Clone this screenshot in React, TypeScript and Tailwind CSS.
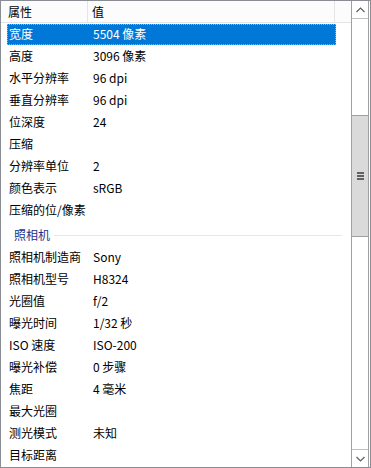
import React from "react";

const rows1: [string, string][] = [
  ["宽度", "5504 像素"],
  ["高度", "3096 像素"],
  ["水平分辨率", "96 dpi"],
  ["垂直分辨率", "96 dpi"],
  ["位深度", "24"],
  ["压缩", ""],
  ["分辨率单位", "2"],
  ["颜色表示", "sRGB"],
  ["压缩的位/像素", ""],
];

const rows2: [string, string][] = [
  ["照相机制造商", "Sony"],
  ["照相机型号", "H8324"],
  ["光圈值", "f/2"],
  ["曝光时间", "1/32 秒"],
  ["ISO 速度", "ISO-200"],
  ["曝光补偿", "0 步骤"],
  ["焦距", "4 毫米"],
  ["最大光圈", ""],
  ["测光模式", "未知"],
  ["目标距离", ""],
];

function Row({ k, v, selected }: { k: string; v: string; selected?: boolean }) {
  return (
    <div className="h-[22px] flex items-center pl-[6px]">
      <div
        className={
          selected
            ? "flex items-center h-[21px] w-[329px] bg-[#0078d7] text-white border border-dotted border-[#f0a040]"
            : "flex items-center h-[21px] w-[329px] text-black border border-transparent"
        }
      >
        <div className="w-[85px] pl-[1px] whitespace-nowrap">{k}</div>
        <div className="whitespace-nowrap">{v}</div>
      </div>
    </div>
  );
}

export default function App() {
  return (
    <div
      className="w-[371px] h-[468px] border border-[#8a8d93] bg-white flex overflow-hidden text-[12px] leading-none"
      style={{ fontFamily: '"Noto Sans CJK SC", "Noto Sans", sans-serif' }}
    >
      <div className="flex-1 flex flex-col">
        <div className="h-[22px] flex bg-[#fcfcfc] border-b border-[#e5e5e5] text-black">
          <div className="w-[87px] border-r border-[#e5e5e5] flex items-center pl-[7px]">属性</div>
          <div className="w-[247px] border-r border-[#e5e5e5] flex items-center pl-[4px]">值</div>
          <div className="flex-1" />
        </div>
        <div className="flex flex-col">
          {rows1.map(([k, v], i) => (
            <Row key={k} k={k} v={v} selected={i === 0} />
          ))}
          <div className="h-[25px] flex items-center pl-[13px] pt-[3px]">
            <span className="text-[#1e3287] whitespace-nowrap">照相机</span>
            <div className="ml-[4px] w-[288px] h-px bg-[#dfe8f5]" />
          </div>
          {rows2.map(([k, v]) => (
            <Row key={k} k={k} v={v} />
          ))}
        </div>
      </div>
      <div className="w-[18px] flex flex-col border-l border-r border-[#a0a0a0] mr-px">
        <div className="h-[18px] border-b border-[#c0c0c0] flex items-center justify-center">
          <svg width="9" height="6" viewBox="0 0 9 6">
            <path d="M0.5 5 L4.5 1 L8.5 5" stroke="#606060" strokeWidth="1.2" fill="none" />
          </svg>
        </div>
        <div className="h-[96px]" />
        <div className="h-[122px] bg-[#dadada] border-t border-b border-[#a0a0a0] flex items-center justify-center">
          <div className="flex flex-col gap-[1px]">
            <div className="w-[7px] h-[2px] bg-[#606060]" />
            <div className="w-[7px] h-[2px] bg-[#606060]" />
            <div className="w-[7px] h-[2px] bg-[#606060]" />
          </div>
        </div>
        <div className="flex-1" />
        <div className="h-[18px] border-t border-[#c0c0c0] flex items-center justify-center">
          <svg width="9" height="6" viewBox="0 0 9 6">
            <path d="M0.5 1 L4.5 5 L8.5 1" stroke="#606060" strokeWidth="1.2" fill="none" />
          </svg>
        </div>
      </div>
    </div>
  );
}
